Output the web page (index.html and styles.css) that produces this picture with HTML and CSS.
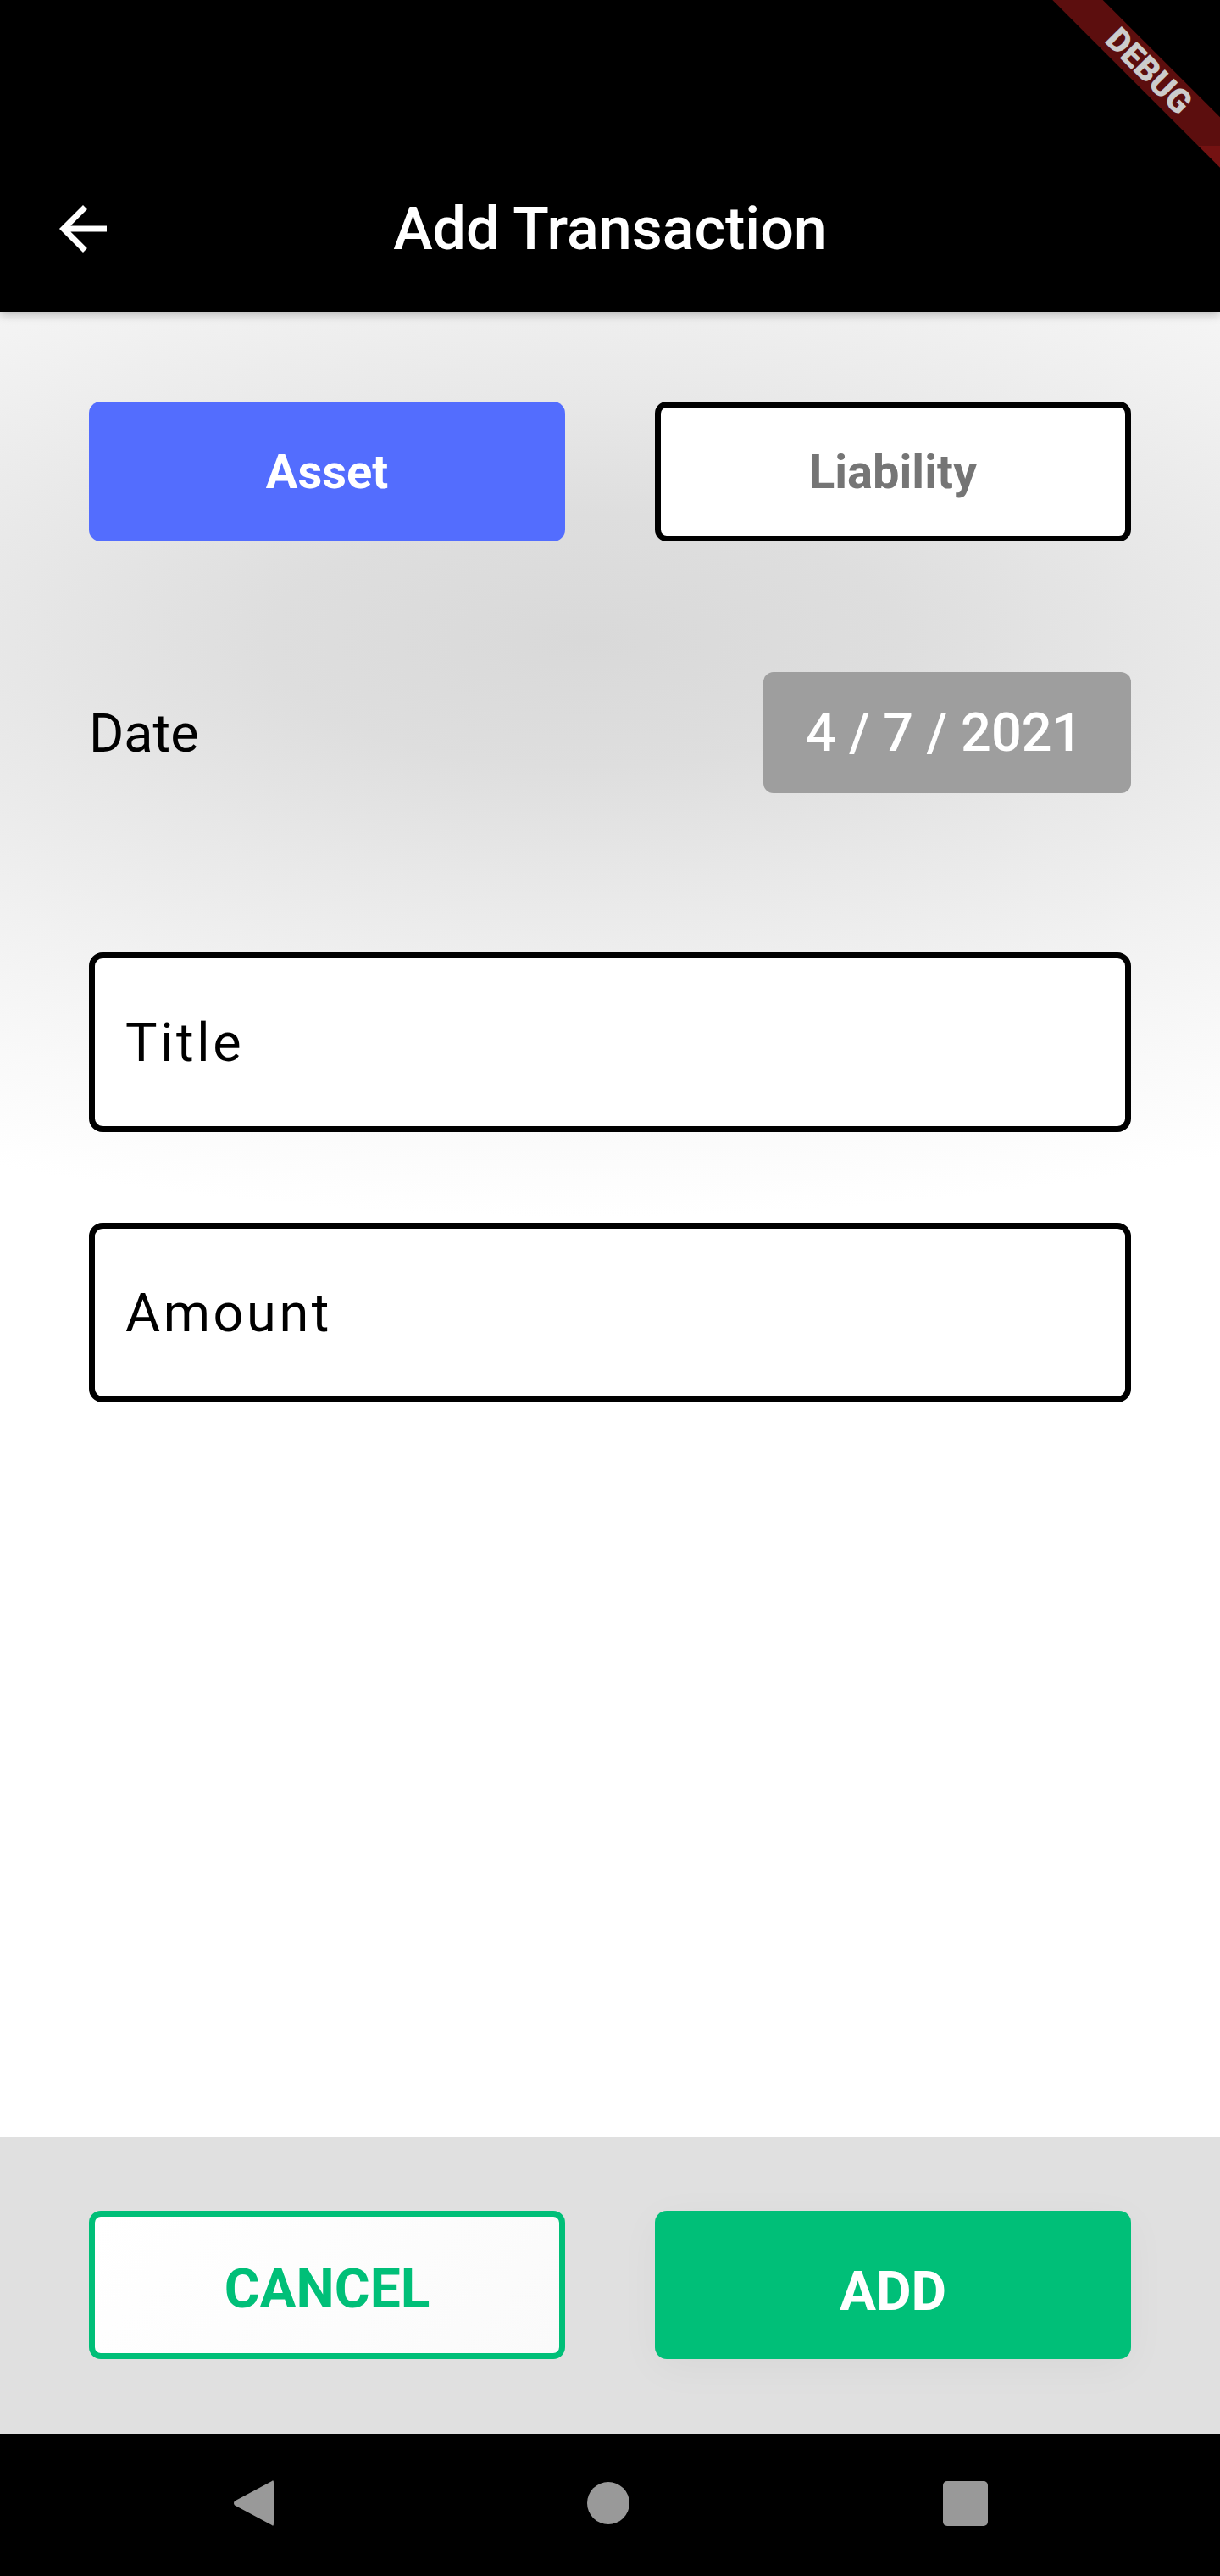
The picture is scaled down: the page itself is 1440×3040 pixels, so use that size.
FILE: index.html
```html
<!DOCTYPE html>
<html lang="en">
<head>
<meta charset="utf-8">
<title>Add Transaction</title>
<link rel="stylesheet" href="styles.css">
</head>
<body>
<div class="screen">
  <header class="appbar">
    <div class="status"></div>
    <div class="toolbar">
      <div class="leading">
        <svg class="back" viewBox="0 0 24 24" width="84" height="84"><path fill="#fff" d="M20 11H7.83l5.59-5.59L12 4l-8 8 8 8 1.41-1.41L7.83 13H20v-2z"/></svg>
      </div>
      <h1 class="title">Add Transaction</h1>
      <div class="trailing"></div>
    </div>
    <div class="banner">DEBUG</div>
    <div class="status-dim"></div>
  </header>

  <main class="content">
    <div class="type-row">
      <button class="type-btn type-btn--active">Asset</button>
      <button class="type-btn type-btn--idle">Liability</button>
    </div>
    <div class="date-row">
      <span class="date-label">Date</span>
      <span class="date-chip">4 / 7 / 2021</span>
    </div>
    <div class="field">Title</div>
    <div class="field field--second">Amount</div>
  </main>

  <footer class="actions">
    <button class="act act--cancel">CANCEL</button>
    <button class="act act--add">ADD</button>
  </footer>

  <nav class="sysnav">
    <svg class="nav-back" viewBox="0 0 48 56" width="48" height="56"><path fill="#999" d="M46 2 Q48 0 48 4 L48 52 Q48 56 46 54 L2 30.5 Q0 28 2 25.5 Z"/></svg>
    <span class="nav-home"></span>
    <span class="nav-recent"></span>
  </nav>
</div>
</body>
</html>
```

FILE: styles.css
```css
* { box-sizing: border-box; }

html, body {
  margin: 0;
  padding: 0;
  background: #fff;
}

body {
  font-family: Roboto, "Noto Sans", "Liberation Sans", sans-serif;
}

.screen {
  width: 1440px;
  height: 3040px;
  display: flex;
  flex-direction: column;
  overflow: hidden;
}

/* ---------- App bar ---------- */
.appbar {
  position: relative;
  background: #000;
  overflow: hidden;
  box-shadow: 0 4px 10px rgba(0, 0, 0, 0.22);
  z-index: 2;
  flex: 0 0 368px;
}

.status {
  height: 172px;
}

.toolbar {
  height: 196px;
  display: grid;
  grid-template-columns: 196px 1fr 196px;
  align-items: center;
}

.leading {
  display: flex;
  align-items: center;
  justify-content: center;
}

.back { display: block; }

.title {
  margin: 0;
  text-align: center;
  color: #fff;
  font-size: 70px;
  font-weight: 500;
  letter-spacing: 0;
}

.banner {
  position: absolute;
  left: 1156px;
  top: 63px;
  width: 400px;
  height: 42px;
  line-height: 42px;
  transform: rotate(45deg);
  background: rgba(183, 28, 28, 0.63);
  color: #fff;
  text-align: center;
  font-size: 39px;
  font-weight: 900;
  letter-spacing: 0;
}

.status-dim {
  position: absolute;
  left: 0;
  top: 0;
  width: 100%;
  height: 172px;
  background: rgba(0, 0, 0, 0.2);
}

/* ---------- Content ---------- */
.content {
  flex: 1 1 auto;
  padding: 106px 105px 0;
  background:
    radial-gradient(ellipse 1700px 680px at 48% 388px,
      #d9d9d9 0%, #dedede 22%, #e8e8e8 42%, #f1f1f1 62%, #f9f9f9 82%, #ffffff 100%),
    #fff;
}

.type-row {
  display: grid;
  grid-template-columns: 1fr 1fr;
  gap: 106px;
}

.type-btn {
  height: 165px;
  border-radius: 14px;
  font-family: inherit;
  font-size: 56px;
  font-weight: 700;
  padding: 0;
}

.type-btn--active {
  background: #536dfe;
  color: #fff;
  border: none;
}

.type-btn--idle {
  background: #fff;
  color: #757575;
  border: 7px solid #000;
}

.date-row {
  margin-top: 154px;
  height: 143px;
  display: flex;
  align-items: center;
  justify-content: space-between;
}

.date-label {
  font-size: 63px;
  color: #000;
  padding-top: 2px;
}

.date-chip {
  width: 434px;
  height: 143px;
  border-radius: 12px;
  background: #9e9e9e;
  color: #fff;
  font-size: 63px;
  font-weight: 500;
  display: flex;
  align-items: center;
  justify-content: center;
  padding-right: 8px;
}

.field {
  margin-top: 188px;
  height: 212px;
  border: 7px solid #000;
  border-radius: 16px;
  background: #fff;
  padding: 0 34px 0 36px;
  display: flex;
  align-items: center;
  font-size: 63px;
  letter-spacing: 3.6px;
  color: #000;
}

.field--second {
  margin-top: 107px;
}

/* ---------- Actions ---------- */
.actions {
  flex: 0 0 350px;
  background: #e0e0e0;
  padding: 87px 105px 0;
  display: grid;
  grid-template-columns: 1fr 1fr;
  gap: 106px;
  align-items: start;
}

.act {
  height: 175px;
  border-radius: 14px;
  font-family: inherit;
  font-size: 64px;
  font-weight: 700;
  padding: 0;
}

.act--cancel {
  background: linear-gradient(135deg, #ffffff, #fafafa);
  color: #00bf78;
  border: 7px solid #00bf78;
  padding-top: 10px;
}

.act--add {
  background: #00bf78;
  color: #fff;
  border: none;
  padding-top: 16px;
  box-shadow: 0 10px 50px rgba(0, 0, 0, 0.04);
}

/* ---------- System nav ---------- */
.sysnav {
  flex: 0 0 168px;
  background: #000;
  display: flex;
  align-items: center;
  justify-content: center;
  gap: 370px;
  padding-bottom: 4px;
}

.nav-back { display: block; }

.nav-home {
  width: 50px;
  height: 50px;
  border-radius: 50%;
  background: #999;
}

.nav-recent {
  width: 53px;
  height: 53px;
  border-radius: 5px;
  background: #999;
}
```
